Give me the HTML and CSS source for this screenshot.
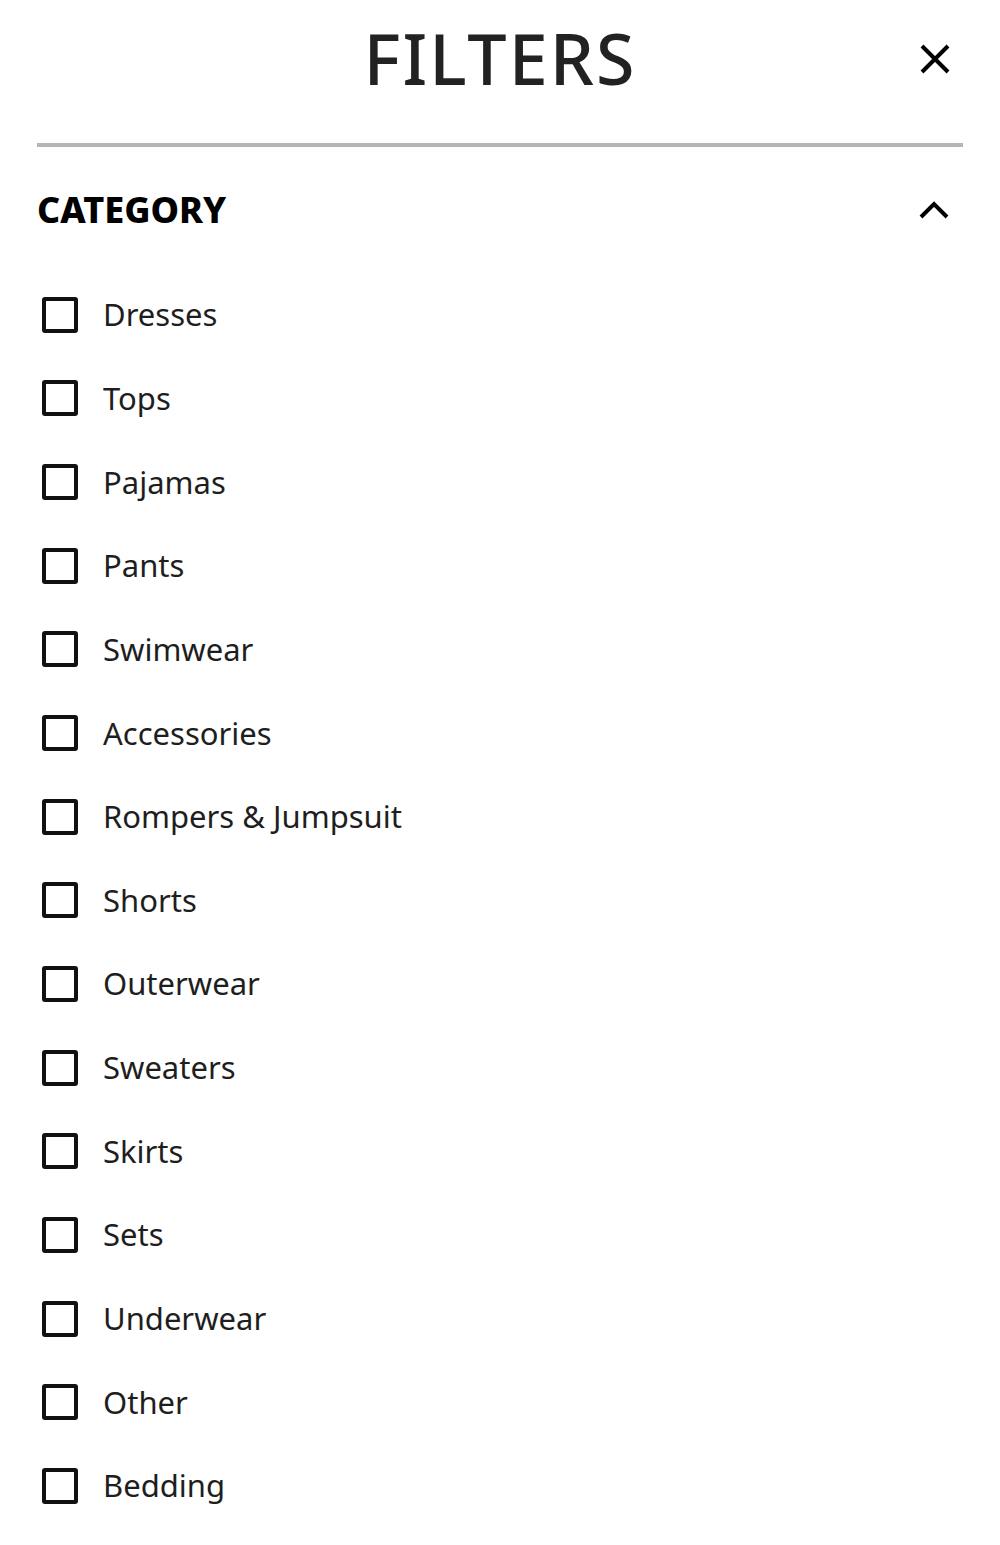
FILE: index.html
```html
<!DOCTYPE html>
<html lang="en">
<head>
<meta charset="utf-8">
<title>Filters</title>
<link rel="stylesheet" href="styles.css">
</head>
<body>
<div class="panel">
  <header class="header">
    <h1 class="title">FILTERS</h1>
    <button class="close" aria-label="Close">
      <svg viewBox="0 0 32 32" width="32" height="32"><path d="M3 3L29 29M29 3L3 29" stroke="#000" stroke-width="4" stroke-linecap="butt" fill="none"/></svg>
    </button>
  </header>
  <div class="divider"></div>
  <section class="group">
    <div class="group-head">
      <h2 class="group-title">CATEGORY</h2>
      <svg class="chevron" viewBox="0 0 30 18" width="30" height="18"><path d="M2 16L15 3L28 16" stroke="#000" stroke-width="4" fill="none"/></svg>
    </div>
    <ul class="options">
      <li class="option"><span class="box"></span><span class="label">Dresses</span></li>
      <li class="option"><span class="box"></span><span class="label">Tops</span></li>
      <li class="option"><span class="box"></span><span class="label">Pajamas</span></li>
      <li class="option"><span class="box"></span><span class="label">Pants</span></li>
      <li class="option"><span class="box"></span><span class="label">Swimwear</span></li>
      <li class="option"><span class="box"></span><span class="label">Accessories</span></li>
      <li class="option"><span class="box"></span><span class="label">Rompers &amp; Jumpsuit</span></li>
      <li class="option"><span class="box"></span><span class="label">Shorts</span></li>
      <li class="option"><span class="box"></span><span class="label">Outerwear</span></li>
      <li class="option"><span class="box"></span><span class="label">Sweaters</span></li>
      <li class="option"><span class="box"></span><span class="label">Skirts</span></li>
      <li class="option"><span class="box"></span><span class="label">Sets</span></li>
      <li class="option"><span class="box"></span><span class="label">Underwear</span></li>
      <li class="option"><span class="box"></span><span class="label">Other</span></li>
      <li class="option"><span class="box"></span><span class="label">Bedding</span></li>
    </ul>
  </section>
</div>
</body>
</html>
```
FILE: styles.css
```css
* { box-sizing: border-box; }
html, body { margin: 0; padding: 0; background: #fff; }
body { font-family: "Noto Sans", "Liberation Sans", sans-serif; color: #222; }
.panel { padding: 0 37px; }
.header {
  position: relative;
  height: 143px;
  display: flex;
  align-items: center;
  justify-content: center;
}
.title {
  margin: -27px 0 0 0;
  font-weight: 500;
  font-size: 70px;
  letter-spacing: 2px;
  line-height: 1;
  color: #222;
}
.close {
  position: absolute;
  right: 12px;
  top: 43px;
  width: 32px;
  height: 32px;
  padding: 0;
  border: 0;
  background: none;
  display: block;
}
.close svg { display: block; }
.divider { height: 4px; background: #b5b5b5; }
.group-head {
  display: flex;
  align-items: center;
  justify-content: space-between;
  height: 126px;
  padding-right: 14px;
}
.group-title {
  margin: 0;
  font-size: 36px;
  font-weight: 800;
  color: #000;
  line-height: 1;
}
.chevron { display: block; }
.options { list-style: none; margin: 0; padding: 0; }
.option {
  display: flex;
  align-items: center;
  height: 83.65px;
}
.box {
  width: 36px;
  height: 36px;
  border: 4px solid #111;
  border-radius: 3px;
  margin-left: 5px;
  margin-right: 25px;
  flex: none;
}
.label { font-size: 31px; color: #1e1e1e; line-height: 1; }
```
